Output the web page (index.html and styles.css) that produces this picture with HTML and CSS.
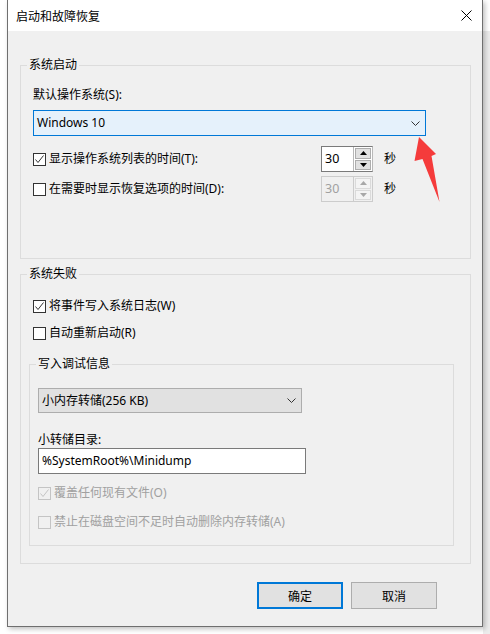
FILE: index.html
```html
<!DOCTYPE html>
<html lang="zh-CN">
<head>
  <meta charset="UTF-8" />
  <title>启动和故障恢复</title>
  <link rel="stylesheet" href="styles.css">
</head>
<body>
  <div class="dialog">
    <div class="titlebar">
      <span class="title">启动和故障恢复</span>
      <svg class="close" width="11" height="11" viewBox="0 0 11 11">
        <path d="M0.5 0.5 L10.5 10.5 M10.5 0.5 L0.5 10.5" stroke="#000" stroke-width="1" fill="none" />
      </svg>
    </div>

    <div class="content">
      <div class="group group-startup">
        <span class="legend">系统启动</span>
        <div class="field-label">默认操作系统(S):</div>
        <div class="combo combo-focus">
          <span>Windows 10</span>
          <svg class="chevron" width="9" height="5" viewBox="0 0 9 5"><path d="M0.5 0.5 L4.5 4.5 L8.5 0.5" stroke="#333" fill="none" /></svg>
        </div>

        <div class="row">
          <div class="check">
            <span class="box"><svg width="11" height="11" viewBox="0 0 11 11"><path d="M1.5 5.5 L4 8.5 L9.5 1.5" stroke="#333" fill="none" /></svg></span>
            显示操作系统列表的时间(T):
          </div>
          <div class="spin">
            <span class="spin-value">30</span>
            <span class="spin-btns">
              <span class="spin-btn"><svg width="7" height="4" viewBox="0 0 7 4"><path d="M0 4 L3.5 0 L7 4 Z" fill="#000" /></svg></span>
              <span class="spin-btn"><svg width="7" height="4" viewBox="0 0 7 4"><path d="M0 0 L3.5 4 L7 0 Z" fill="#000" /></svg></span>
            </span>
          </div>
          <span class="unit">秒</span>
        </div>

        <div class="row row-second">
          <div class="check">
            <span class="box"></span>
            在需要时显示恢复选项的时间(D):
          </div>
          <div class="spin disabled">
            <span class="spin-value">30</span>
            <span class="spin-btns">
              <span class="spin-btn"><svg width="7" height="4" viewBox="0 0 7 4"><path d="M0 4 L3.5 0 L7 4 Z" fill="#a8a8a8" /></svg></span>
              <span class="spin-btn"><svg width="7" height="4" viewBox="0 0 7 4"><path d="M0 0 L3.5 4 L7 0 Z" fill="#a8a8a8" /></svg></span>
            </span>
          </div>
          <span class="unit">秒</span>
        </div>
      </div>

      <div class="group group-failure">
        <span class="legend">系统失败</span>
        <div class="check check-line first">
          <span class="box"><svg width="11" height="11" viewBox="0 0 11 11"><path d="M1.5 5.5 L4 8.5 L9.5 1.5" stroke="#333" fill="none" /></svg></span>
          将事件写入系统日志(W)
        </div>
        <div class="check check-line second">
          <span class="box"></span>
          自动重新启动(R)
        </div>

        <div class="group group-debug">
          <span class="legend">写入调试信息</span>
          <div class="combo combo-plain">
            <span>小内存转储(256 KB)</span>
            <svg class="chevron" width="9" height="5" viewBox="0 0 9 5"><path d="M0.5 0.5 L4.5 4.5 L8.5 0.5" stroke="#333" fill="none" /></svg>
          </div>
          <div class="field-label dump-label">小转储目录:</div>
          <div class="textbox">%SystemRoot%\Minidump</div>
          <div class="check check-line disabled overwrite">
            <span class="box"><svg width="11" height="11" viewBox="0 0 11 11"><path d="M1.5 5.5 L4 8.5 L9.5 1.5" stroke="#c4c4c4" fill="none" /></svg></span>
            覆盖任何现有文件(O)
          </div>
          <div class="check check-line disabled autodelete">
            <span class="box"></span>
            禁止在磁盘空间不足时自动删除内存转储(A)
          </div>
        </div>
      </div>

      <div class="buttons">
        <button class="btn btn-default">确定</button>
        <button class="btn">取消</button>
      </div>
    </div>
  </div>

  <svg class="pointer" width="490" height="634" viewBox="0 0 490 634">
    <polygon points="419,137 436,154 431.5,156 439.5,202 422.5,159 414.5,161" fill="#f53b3b" />
  </svg>
</body>
</html>
```

FILE: styles.css
```css
:root {
  --face: #f0f0f0;
  --text: #000;
  --group-line: #dcdcdc;
  --btn-face: #e1e1e1;
  --btn-line: #adadad;
  --accent: #0078d7;
  --disabled: #a0a0a0;
}

body {
  margin: 0;
  height: 634px;
  overflow: hidden;
  position: relative;
  font-family: "Noto Sans", "Noto Sans CJK SC", sans-serif;
  font-size: 12px;
  line-height: 16px;
  color: var(--text);
  background: linear-gradient(#ffffff 0 31px, #ececec 31px) right top / 7px 100% no-repeat, #ffffff;
}

.dialog {
  margin-left: 7px;
  width: 476px;
  height: 627px;
  box-sizing: border-box;
  border: 1px solid #6f6f6f;
  border-top: none;
  background: var(--face);
  box-shadow: 2px 2px 5px rgba(0, 0, 0, 0.25);
}

.titlebar {
  height: 31px;
  background: #fff;
  display: flex;
  align-items: center;
  justify-content: space-between;
  padding: 0 10px 0 8px;
}

.title {
  font-family: "Noto Sans CJK SC", sans-serif;
}

.content {
  padding: 0 11px 0 12px;
}

.group {
  position: relative;
  border: 1px solid var(--group-line);
  box-sizing: border-box;
}

.legend {
  position: absolute;
  top: -9px;
  left: 6px;
  padding: 0 2px;
  background: var(--face);
}

.group-startup {
  margin-top: 34px;
  height: 194px;
  padding: 21px 0 0 12px;
}

.field-label {
  height: 16px;
}

.combo {
  display: flex;
  align-items: center;
  justify-content: space-between;
  box-sizing: border-box;
  padding: 0 5px 0 3px;
}

.combo-focus {
  margin-top: 7px;
  width: 393px;
  height: 26px;
  border: 1px solid var(--accent);
  background: #e5f1fb;
}

.combo-plain {
  width: 264px;
  height: 25px;
  border: 1px solid var(--btn-line);
  background: var(--btn-face);
}

.row {
  display: flex;
  align-items: center;
  height: 26px;
  margin-top: 10px;
}

.row-second {
  margin-top: 4px;
}

.check {
  display: flex;
  align-items: center;
  gap: 3px;
  height: 16px;
}

.row .check {
  width: 288px;
}

.box {
  width: 13px;
  height: 13px;
  box-sizing: border-box;
  border: 1px solid #333;
  background: #fff;
  display: flex;
  align-items: center;
  justify-content: center;
}

.check.disabled {
  color: var(--disabled);
}

.check.disabled .box {
  border-color: #c4c4c4;
  background: var(--face);
}

.spin {
  display: flex;
  width: 52px;
  height: 26px;
  box-sizing: border-box;
  border: 1px solid #7a7a7a;
  border-right-color: #b8b8b8;
  background: #fff;
}

.spin-value {
  flex: 1;
  padding-left: 3px;
  line-height: 24px;
  font-size: 12.5px;
}

.spin-btns {
  display: flex;
  flex-direction: column;
  gap: 1px;
  padding: 1px;
  width: 16px;
  background: #fff;
  border-left: 1px solid #b8b8b8;
}

.spin-btn {
  flex: 1;
  background: var(--btn-face);
  border: 1px solid var(--btn-line);
  display: flex;
  align-items: center;
  justify-content: center;
}

.spin.disabled {
  border-color: #cccccc;
  background: var(--face);
  color: var(--disabled);
}

.spin.disabled .spin-btns {
  background: var(--face);
  border-left-color: #cccccc;
}

.spin.disabled .spin-btn {
  background: #f4f4f4;
  border-color: #dadada;
}

.unit {
  margin-left: 11px;
}

.group-failure {
  margin-top: 15px;
  height: 290px;
  padding: 0 16px 0 8px;
}

.check-line {
  margin-left: 4px;
}

.check-line.first {
  margin-top: 23px;
}

.check-line.second {
  margin-top: 11px;
}

.group-debug {
  margin-top: 23px;
  height: 182px;
  padding: 23px 0 0 8px;
}

.group-debug .check-line {
  margin-left: 0;
}

.dump-label {
  margin-top: 19px;
}

.textbox {
  width: 268px;
  height: 26px;
  box-sizing: border-box;
  border: 1px solid #7a7a7a;
  background: #fff;
  padding-left: 3px;
  line-height: 24px;
  font-size: 12px;
}

.overwrite {
  margin-top: 11px;
}

.autodelete {
  margin-top: 13px;
}

.buttons {
  display: flex;
  justify-content: flex-end;
  gap: 8px;
  margin-top: 18px;
  padding-right: 34px;
}

.btn {
  width: 86px;
  height: 27px;
  box-sizing: border-box;
  border: 1px solid var(--btn-line);
  background: var(--btn-face);
  font-family: "Noto Sans CJK SC", sans-serif;
  font-size: 12px;
  color: var(--text);
  padding: 0;
}

.btn-default {
  border: 2px solid var(--accent);
}

.pointer {
  position: absolute;
  left: 0;
  top: 0;
}
```
